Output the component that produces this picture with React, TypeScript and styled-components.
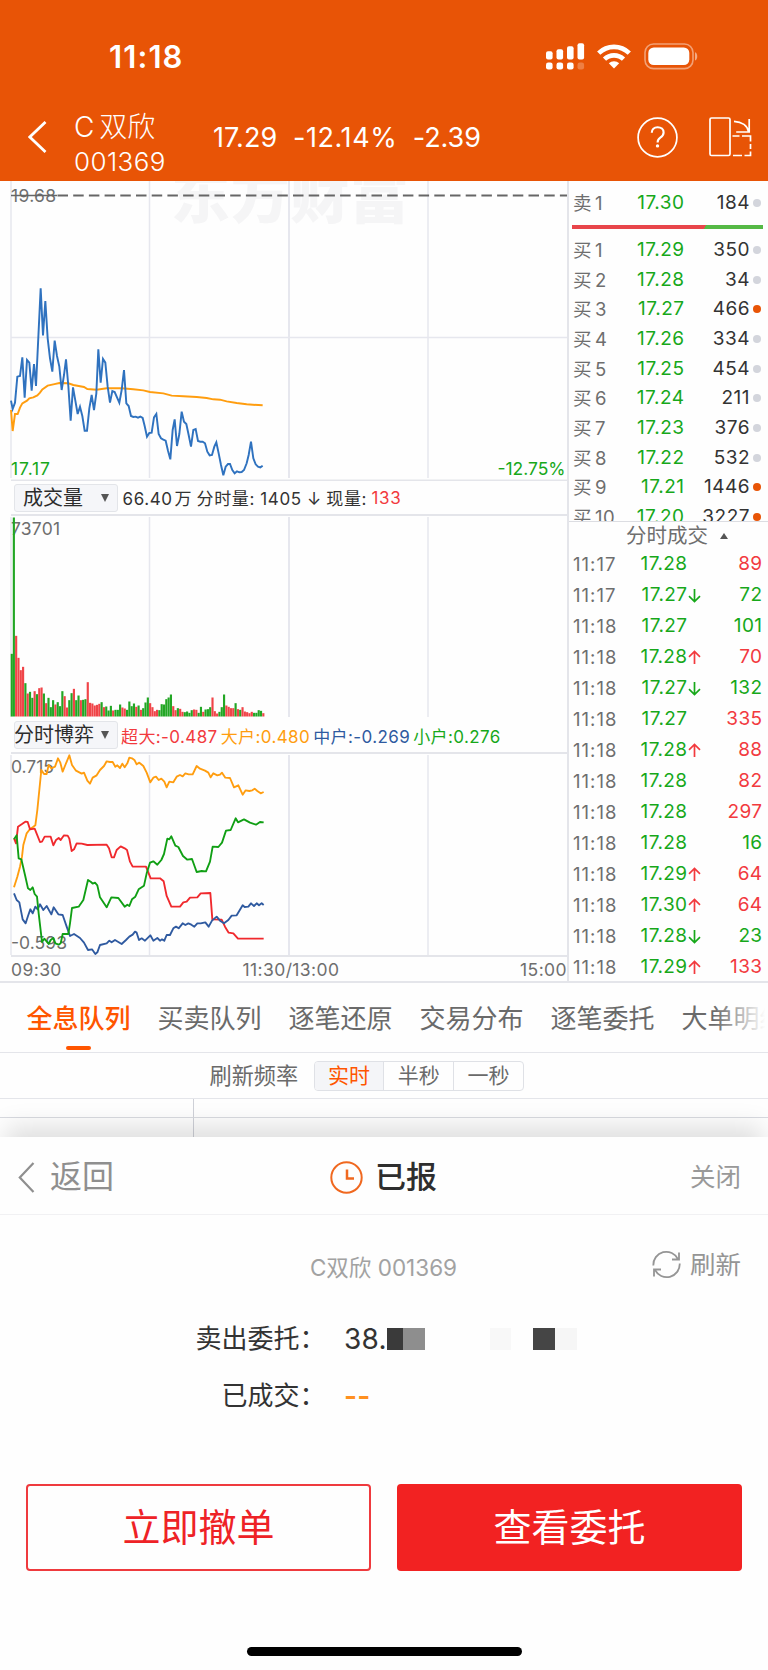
import React from "react";
import styled, { createGlobalStyle, css } from "styled-components";

const C = {
  orange: "#e85406",
  tabOrange: "#ff5500",
  green: "#17a81a",
  red: "#f23a3e",
  grey: "#6e6e6e",
  dark: "#333333",
  line: "#e4e5ea",
  grid: "#e6e7ee",
  bg: "#fefefe",
};
const FONT = `Inter, "Noto Sans CJK SC", sans-serif`;

const GlobalStyle = createGlobalStyle`
  *, *::before, *::after { box-sizing: border-box; }
  body { margin: 0; background: ${C.bg}; font-family: ${FONT}; color: ${C.dark}; }
  svg { display: block; flex: none; }
  svg text { font-family: ${FONT}; }
  button { font-family: inherit; padding: 0; margin: 0; border: 0; background: none; }
`;

/* ---------- page ---------- */
const Page = styled.div`
  width: 768px;
  height: 1670px;
  display: flex;
  flex-direction: column;
  overflow: hidden;
  background: ${C.bg};
`;

/* ---------- header ---------- */
const Header = styled.header`
  height: 181px;
  flex: none;
  background: ${C.orange};
  color: #fff;
`;
const StatusBar = styled.div`
  height: 108px;
  padding: 5px 70.5px 0 109px;
  display: flex;
  align-items: center;
  justify-content: space-between;
`;
const Clock = styled.span`
  font-size: 31px;
  font-weight: 600;
  letter-spacing: 1.1px;
`;
const NavBar = styled.div`
  height: 73px;
  padding: 0 16px 14.5px 28px;
  display: flex;
  align-items: center;
`;
const StockName = styled.div`
  width: 139px;
  margin-left: 27px;
  padding-top: 13.5px;
  display: flex;
  flex-direction: column;
  font-weight: 300;
`;
const NameLine = styled.span`
  height: 35px;
  line-height: 35px;
  font-size: 28px;
  word-spacing: -3px;
`;
const CodeLine = styled.span`
  height: 33px;
  line-height: 33px;
  font-size: 26px;
  letter-spacing: 0.4px;
`;
const Quote = styled.div`
  flex: 1;
  display: flex;
  gap: 15.5px;
  font-size: 27px;
`;
const QuoteValue = styled.span<{ $ls: number }>`
  letter-spacing: ${(p) => p.$ls}px;
`;
const NavIcons = styled.div`
  display: flex;
  align-items: center;
  gap: 31px;
`;

/* ---------- market area ---------- */
const Market = styled.section`
  height: 802px;
  flex: none;
  display: flex;
  overflow: hidden;
  border-bottom: 2px solid ${C.line};
`;
const Charts = styled.div`
  width: 567px;
  display: flex;
  flex-direction: column;
`;
const IndicatorBar = styled.div<{ $h: number; $gap: number; $ls: number }>`
  height: ${(p) => p.$h}px;
  padding-left: 14px;
  display: flex;
  align-items: center;
  gap: ${(p) => p.$gap}px;
  font-size: 17px;
  letter-spacing: ${(p) => p.$ls}px;
  white-space: nowrap;
`;
const Picker = styled.button`
  width: 104px;
  height: 28px;
  padding: 0 8px 0 0;
  display: flex;
  align-items: center;
  justify-content: space-between;
  border: 1.5px solid #e3e5e9;
  border-radius: 3px;
  background: #f5f6f9;
  color: #2c2c2c;
  font-size: 20px;
  line-height: 26px;
  letter-spacing: 0;
`;
const PickerText = styled.span<{ $inset?: number }>`
  margin-left: ${(p) => p.$inset ?? 0}px;
`;
const Triangle = styled.i<{ $up?: boolean }>`
  width: 0;
  height: 0;
  border-left: 4.5px solid transparent;
  border-right: 4.5px solid transparent;
  ${(p) =>
    p.$up
      ? css`border-bottom: 6.5px solid #555;`
      : css`border-top: 8px solid #555;`}
`;
const Stat = styled.span<{ $c?: string; $ws?: number }>`
  color: ${(p) => p.$c ?? C.dark};
  word-spacing: ${(p) => p.$ws ?? 0}px;
`;
const TimeAxis = styled.div`
  flex: 1;
  padding: 1px 0 0 11px;
  display: flex;
  align-items: center;
  justify-content: space-between;
  color: ${C.grey};
  font-size: 17.5px;
  letter-spacing: 0.4px;
`;

/* ---------- order book ---------- */
const Side = styled.aside`
  flex: 1;
  display: flex;
  flex-direction: column;
  border-left: 2px solid ${C.line};
`;
const Book = styled.div`
  height: 341px;
  flex: none;
  overflow: hidden;
  border-bottom: 1.5px solid #dcdde2;
`;
const BookRow = styled.div<{ $first?: boolean }>`
  height: ${(p) => (p.$first ? 41.5 : 29.7)}px;
  padding: ${(p) => (p.$first ? 1.5 : 0)}px 7px 0 4px;
  display: grid;
  grid-template-columns: 50px 61.5px 1fr 11px;
  align-items: center;
  font-size: 19px;
  line-height: 24px;
  letter-spacing: 0.5px;
`;
const Level = styled.span`
  display: flex;
  gap: 3px;
  color: ${C.grey};
  font-size: 18.5px;
  white-space: nowrap;
`;
const Num = styled.span<{ $c?: string }>`
  text-align: right;
  color: ${(p) => p.$c ?? C.dark};
`;
const Dot = styled.i<{ $hot?: boolean }>`
  justify-self: end;
  width: 8px;
  height: 8px;
  border-radius: 50%;
  background: ${(p) => (p.$hot ? C.orange : "#d3d5dc")};
`;
const Ratio = styled.div`
  height: 4px;
  margin: 2.5px 5px 6px 3px;
  background: linear-gradient(120deg, #e8454a 69.5%, #55b945 69.5%);
`;
const TicksTitle = styled.div`
  height: 27px;
  flex: none;
  padding: 1px 0 0 57px;
  display: flex;
  align-items: center;
  gap: 12px;
  color: ${C.grey};
  font-size: 20.5px;
  line-height: 26px;
`;
const TickRow = styled.div`
  height: 30.97px;
  flex: none;
  padding: 0 5.5px 0 4px;
  display: grid;
  grid-template-columns: 53px 61.5px 14px 1fr;
  align-items: center;
  font-size: 19px;
  line-height: 24px;
  letter-spacing: 0.4px;
`;
const Time = styled.span`
  color: ${C.grey};
  font-size: 18.5px;
  letter-spacing: 1px;
`;

/* ---------- tabs ---------- */
const Tabs = styled.nav`
  position: relative;
  height: 69.5px;
  flex: none;
  padding-left: 26.5px;
  display: flex;
  gap: 27px;
  overflow: hidden;
  border-bottom: 1.5px solid ${C.line};
`;
const TabsFade = styled.div`
  position: absolute;
  top: 0;
  right: 0;
  width: 54px;
  height: 68px;
  background: linear-gradient(90deg, rgba(254, 254, 254, 0), ${C.bg} 95%);
`;
const Tab = styled.button<{ $on?: boolean }>`
  flex: none;
  height: 68px;
  display: flex;
  flex-direction: column;
  align-items: center;
  color: ${(p) => (p.$on ? C.tabOrange : "#6a6a6a")};
  font-size: 26px;
  font-weight: ${(p) => (p.$on ? 500 : 400)};
  line-height: 38px;
  padding-top: 17px;
`;
const Underline = styled.i`
  width: 25px;
  height: 4px;
  margin: 8px 0 0 0;
  border-radius: 2px;
  background: ${C.tabOrange};
`;
const RefreshRate = styled.div`
  height: 46.5px;
  flex: none;
  padding: 1px 0 0 209.5px;
  display: flex;
  align-items: center;
  gap: 15.5px;
  border-bottom: 1.5px solid ${C.line};
  color: #6a6a6a;
  font-size: 22.2px;
  line-height: 30px;
`;
const Segments = styled.div`
  width: 210px;
  height: 30px;
  display: flex;
  border: 1.5px solid #dfe1e6;
  border-radius: 4px;
  overflow: hidden;
`;
const Segment = styled.button<{ $on?: boolean }>`
  flex: 1;
  color: ${(p) => (p.$on ? C.tabOrange : "#6a6a6a")};
  background: ${(p) => (p.$on ? "#f4f5f8" : "transparent")};
  font-size: 21px;
  line-height: 26px;
  & + & { border-left: 1.5px solid #dfe1e6; }
`;
const QueuePeek = styled.div`
  height: 38px;
  flex: none;
  display: grid;
  grid-template-columns: 194px 1fr;
  grid-template-rows: 19px 19px;
`;
const PeekCell = styled.div<{ $right?: boolean; $bottom?: boolean }>`
  border-right: ${(p) => (p.$right ? "1.5px solid #cfd1d8" : "0")};
  border-bottom: ${(p) => (p.$bottom ? "1.5px solid #d8dae0" : "0")};
`;

/* ---------- order sheet ---------- */
const Sheet = styled.section`
  position: relative;
  flex: 1;
  display: flex;
  flex-direction: column;
  background: ${C.bg};
  box-shadow: 0 -16px 24px -6px rgba(0, 0, 0, 0.13);
  clip-path: inset(-38px 0 0 0);
`;
const SheetHeader = styled.div`
  height: 78px;
  padding: 3px 27px 0 18px;
  display: grid;
  grid-template-columns: 1fr auto 1fr;
  align-items: center;
  border-bottom: 1.5px solid #f1f1f3;
`;
const Back = styled.button`
  display: flex;
  align-items: center;
  gap: 15px;
  color: #8f8f8f;
  font-size: 32px;
  line-height: 44px;
`;
const SheetTitle = styled.h1`
  margin: 0 0 0 8px;
  display: flex;
  align-items: center;
  gap: 12px;
  color: #2e2e2e;
  font-size: 31px;
  font-weight: 500;
  line-height: 44px;
`;
const Close = styled.button`
  justify-self: end;
  color: #999;
  font-size: 25.5px;
  line-height: 36px;
`;
const Subject = styled.div`
  height: 70px;
  margin-top: 14.5px;
  padding: 0 27px;
  display: grid;
  grid-template-columns: 1fr auto 1fr;
  align-items: center;
  color: #a2a2a2;
`;
const SubjectName = styled.span`
  grid-column: 2;
  padding: 2px 1px 0 0;
  font-size: 22.5px;
`;
const Reload = styled.button`
  justify-self: end;
  display: flex;
  align-items: center;
  gap: 9px;
  color: #959595;
  font-size: 25.5px;
  line-height: 36px;
`;
const Details = styled.div`
  margin-top: 11.5px;
`;
const Detail = styled.div`
  height: 56.5px;
  display: grid;
  grid-template-columns: 325.5px 1fr;
  column-gap: 18.5px;
  align-items: center;
  font-size: 26px;
  line-height: 38px;
  color: ${C.dark};
`;
const DetailLabel = styled.span`
  text-align: right;
`;
const DetailValue = styled.span<{ $pending?: boolean }>`
  display: flex;
  align-items: center;
  font-size: 28px;
  font-weight: ${(p) => (p.$pending ? 600 : 400)};
  letter-spacing: 0.3px;
  color: ${(p) => (p.$pending ? "#ff9020" : C.dark)};
`;
const Mask = styled.i<{ $w: number; $c?: string }>`
  width: ${(p) => p.$w}px;
  height: 22px;
  margin-top: -1px;
  background: ${(p) => p.$c ?? "transparent"};
`;
const Actions = styled.div`
  margin-top: 59.5px;
  padding: 0 26px;
  display: flex;
  gap: 26px;
`;
const Action = styled.button<{ $solid?: boolean }>`
  flex: 1;
  height: 87px;
  border: 2px solid ${(p) => (p.$solid ? "#f22222" : "#ef3a3e")};
  border-radius: 4px;
  background: ${(p) => (p.$solid ? "#f22222" : "transparent")};
  color: ${(p) => (p.$solid ? "#fff" : "#ee2226")};
  font-size: 38px;
  line-height: 56px;
`;
const HomeBar = styled.div`
  width: 275px;
  height: 9px;
  margin: auto auto 14px;
  border-radius: 5px;
  background: #000;
`;

/* ---------- icons ---------- */
const StatusIcons = styled.div`
  display: flex;
  align-items: center;
  gap: 12.5px;
`;
const Signal = () => (
  <svg width="39" height="27" viewBox="0 0 39 27" fill="#fff">
    <rect x="0" y="8.2" width="6.6" height="8.3" rx="2" />
    <rect x="10.5" y="6.2" width="6.6" height="10.3" rx="2" />
    <rect x="21" y="3.2" width="6.6" height="13.3" rx="2" />
    <rect x="31.5" y="0.2" width="6.6" height="16.3" rx="2" />
    <rect x="0" y="19.5" width="6.6" height="7" rx="2.2" />
    <rect x="10.5" y="19.5" width="6.6" height="7" rx="2.2" />
    <rect x="21" y="19.5" width="6.6" height="7" rx="2.2" />
    <rect x="31.5" y="19.5" width="6.6" height="7" rx="2.2" opacity=".25" />
  </svg>
);
const Wifi = () => (
  <svg width="34" height="25" viewBox="0 0 34 25" fill="none" stroke="#fff" strokeWidth="4.6">
    <path d="M1.7 9.1a21.8 21.8 0 0 1 30.6 0" />
    <path d="M7.5 15.2a13.6 13.6 0 0 1 19 0" />
    <path d="M17 24.6l-5.2-5.3a7.4 7.4 0 0 1 10.4 0z" fill="#fff" stroke="none" />
  </svg>
);
const Battery = () => (
  <svg width="54" height="27" viewBox="0 0 54 27">
    <rect x="1" y="1" width="48" height="24.6" rx="8.5" fill="none" stroke="#fff" strokeOpacity=".45" strokeWidth="1.6" />
    <rect x="4.3" y="4.5" width="41" height="17.6" rx="5.5" fill="#fff" />
    <path d="M51 9.2c3 1 3 7.3 0 8.4z" fill="#fff" fillOpacity=".5" />
  </svg>
);
const Chevron = ({ w, h, sw }: { w: number; h: number; sw: number }) => (
  <svg width={w} height={h} viewBox={`0 0 ${w} ${h}`} fill="none" stroke="currentColor" strokeWidth={sw}>
    <path d={`M${w - 1.5} 1L1.8 ${h / 2}L${w - 1.5} ${h - 1}`} />
  </svg>
);
const Help = () => (
  <svg width="41" height="41" viewBox="0 0 41 41" fill="none" stroke="#fff" strokeWidth="1.7">
    <circle cx="20.5" cy="20.5" r="19.4" />
    <path d="M14.8 15.8c0-3.3 2.3-5.6 5.8-5.6s6 2.1 6 5.2c0 2.6-1.3 3.8-3.3 5.2c-2 1.4-2.7 2.4-2.7 5" strokeWidth="2.1" />
    <circle cx="20.5" cy="28.9" r="1.7" fill="#fff" stroke="none" />
  </svg>
);
const Rotate = () => (
  <svg width="43" height="40" viewBox="0 0 43 40" fill="none" stroke="#fff" strokeWidth="1.7">
    <rect x="1" y="1" width="20" height="37.5" rx="1.5" />
    <path d="M25 4.3c8 .5 13.5 4.5 14.6 10.5M40.2 2v13h-13" />
    <path d="M23.5 19h7m2.5 0h8.5v5.5m0 2.5v5m0 2.5v4h-6m-2.5 0h-9" />
  </svg>
);
const Arrow = ({ up }: { up?: boolean }) => (
  <svg width="13" height="15" viewBox="0 0 13 15" fill="none" stroke={up ? C.red : C.green} strokeWidth="1.7">
    <path d={up ? "M6.5 14V1.5M1 6.8L6.5 1.5L12 6.8" : "M6.5 1v12.5M1 8.2L6.5 13.5L12 8.2"} />
  </svg>
);
const ClockIcon = () => (
  <svg width="33" height="33" viewBox="0 0 33 33" fill="none" stroke="#f0681f" strokeWidth="2">
    <circle cx="16.5" cy="16.5" r="15.2" />
    <path d="M17 8.5v9h7" strokeWidth="2.5" />
  </svg>
);
const ReloadIcon = () => (
  <svg width="29" height="29" viewBox="0 0 29 29" fill="none" stroke="currentColor" strokeWidth="1.8">
    <path d="M1.3 15.5A13 13 0 0 1 26 9.2M27 2.5v7h-7" />
    <path d="M27.7 13.5A13 13 0 0 1 3 19.8M2 26.5v-7h7" />
  </svg>
);

/* ---------- chart data (three units per pixel) ---------- */
const PRICE =
  "33,662 38,687 45,668 52,590 60,588 67,532 74,653 81,540 88,548 95,632 102,552 108,618 122,325 129,466 136,363 143,475 150,535 157,575 164,482 171,528 178,560 185,630 192,585 198,538 205,618 212,722 219,622 226,662 233,702 240,680 247,708 254,752 261,752 268,685 275,645 282,690 289,640 295,508 302,608 309,537 316,548 323,620 330,668 337,633 344,636 351,652 358,668 365,630 372,570 379,670 386,678 393,708 400,711 407,710 414,713 421,710 428,714 434,738 441,770 448,759 455,758 462,712 469,702 476,762 483,775 490,779 497,782 504,812 511,838 518,750 524,718 531,798 538,762 545,695 552,725 559,732 566,765 573,800 580,750 587,747 594,783 601,785 608,785 615,790 622,815 629,826 636,825 643,800 649,787 656,820 663,855 670,886 677,860 684,852 690,852 697,870 704,880 711,874 718,877 725,876 732,870 740,850 746,825 753,785 760,835 767,853 774,860 781,862 788,857";
const AVERAGE =
  "33,690 38,753 45,702 53,702 60,683 67,670 81,662 88,655 100,652 112,646 120,638 127,628 143,617 160,613 178,609 205,610 220,615 252,621 262,627 290,629 320,625 365,625 400,628 430,631 450,636 490,640 515,647 550,649 590,651 620,654 640,658 660,659 680,664 710,669 740,673 788,676";
const VOLUME =
  "188g 597g 242r 176r 139r 149r 100g 69r 74g 56g 76r 67g 85r 87r 69g 40r 56g 28g 49g 36r 43g 31g 76g 61r 27r 49g 70g 83r 49g 63g 49r 50g 52g 103r 41r 39r 33r 35r 38r 43g 28r 30g 18g 32g 18r 20g 20g 36g 27r 24r 20g 45g 31g 39g 29r 33g 20r 25g 42g 57g 40r 28r 16r 20r 19g 37g 36g 52g 57g 66g 31r 19r 25g 23r 14r 13g 15g 11g 19g 21r 20r 11g 29g 14r 21g 22g 28g 57r 16r 9r 14g 28g 66g 33r 29r 25r 25r 40g 22r 20g 28r 15r 13r 10r 14r 11g 11g 19g 17g 10r".split(" ");
const FLOWS = [
  { c: "#ff9d0f", p: "42,532 52,500 60,470 66,440 70,405 80,370 90,357 98,352 106,346 112,300 118,240 124,180 132,192 140,192 146,165 154,175 165,170 174,145 181,158 188,185 196,165 208,136 216,165 228,182 245,191 252,188 262,212 270,221 278,203 290,196 300,180 312,168 320,154 330,156 338,156 346,170 352,166 360,174 367,161 374,172 382,160 388,143 396,145 404,151 410,163 418,158 430,168 440,188 451,217 460,203 468,200 476,210 484,206 493,215 500,232 508,215 520,217 530,200 540,195 548,199 556,190 566,193 578,193 590,168 600,176 615,182 625,188 632,202 640,190 652,196 660,194 666,188 676,203 690,204 702,232 715,226 728,254 737,241 748,243 757,241 764,236 772,243 782,250 791,246" },
  { c: "#f0292d", p: "42,385 48,400 54,350 66,342 76,335 83,336 90,358 104,356 120,396 126,395 134,380 152,380 160,406 168,390 176,384 182,390 192,376 203,377 208,386 215,423 222,418 230,400 245,401 262,405 320,404 327,415 335,442 342,442 350,420 362,409 374,415 381,420 390,455 398,470 438,470 444,485 452,505 480,505 491,514 500,558 514,590 540,590 550,577 560,575 570,563 592,562 602,550 631,549 637,628 665,629 675,650 686,668 700,670 714,686 791,686" },
  { c: "#2f5aa0", p: "42,550 50,570 58,577 68,628 77,640 84,618 91,598 98,610 106,590 113,598 120,583 130,600 140,588 154,613 161,592 175,613 188,615 200,650 210,678 222,672 240,684 252,698 264,720 276,718 286,732 292,727 300,705 320,700 328,692 335,697 345,690 365,702 378,690 388,680 398,674 405,665 410,668 417,690 425,685 435,692 451,676 460,692 472,684 480,692 486,688 493,692 500,675 510,675 520,655 528,650 536,655 548,640 556,645 565,640 574,644 583,650 592,640 602,640 616,637 626,650 636,632 650,620 660,632 672,640 685,630 695,617 710,616 728,586 734,591 745,590 753,580 762,588 770,580 777,586 785,580 791,585" },
  { c: "#109f14", p: "42,388 50,376 56,445 64,448 75,495 84,535 91,540 98,532 104,552 111,560 116,610 126,696 133,686 146,702 152,690 160,684 166,700 176,704 182,700 188,672 205,672 210,640 216,594 236,590 250,570 264,510 273,516 278,521 285,518 292,526 300,562 320,592 334,562 355,564 374,590 382,584 388,588 396,568 406,560 416,538 432,527 440,490 450,458 460,454 472,464 484,450 492,432 502,386 508,388 514,379 526,407 535,411 549,438 562,449 576,447 590,486 605,483 618,484 630,455 638,410 655,411 666,398 678,362 692,360 707,325 714,337 732,328 750,338 768,344 780,336 791,337" },
];

const Verticals = ({ h }: { h: number }) => (
  <g stroke={C.grid} strokeWidth="1.5">
    <path d={`M11 0V${h}M149.5 0V${h}M428 0V${h}`} />
    <path d={`M289 0V${h}`} strokeWidth="2" />
  </g>
);

const PriceChart = () => (
  <svg width="567" height="300" viewBox="0 0 567 300" fontSize="17.5">
    <text x="171" y="37" fontSize="59" fontWeight="900" fill="#f5f5f6" textLength="238">东方财富</text>
    <Verticals h={297} />
    <path d="M11 156.5H567" stroke={C.grid} strokeWidth="1.5" />
    <path d="M11 299.5H567" stroke={C.line} strokeWidth="2" />
    <text x="11" y="21" fill={C.grey} textLength="45">19.68</text>
    <path d="M11 14.5H57" stroke="#666" strokeWidth="1.5" />
    <path d="M57.5 14.5H567" stroke="#666" strokeWidth="1.8" strokeDasharray="10.5 5.2" />
    <text x="11" y="294" fill={C.green} textLength="39">17.17</text>
    <text x="497.5" y="294" fill={C.green} textLength="68">-12.75%</text>
    <g transform="translate(0 -1) scale(.33333)" fill="none" strokeWidth="5.8" strokeLinejoin="miter">
      <polyline points={AVERAGE} stroke="#ff9d0f" />
      <polyline points={PRICE} stroke="#2f72bf" />
    </g>
  </svg>
);

const VolumeChart = () => (
  <svg width="567" height="204" viewBox="0 0 567 204" fontSize="17.5">
    <path d="M11 1H567" stroke={C.line} strokeWidth="2" />
    <g transform="translate(0 3)"><Verticals h={200} /></g>
    <text x="11" y="20.5" fill={C.grey} textLength="49">73701</text>
    {VOLUME.map((v, i) => {
      const h = parseInt(v, 10) / 3;
      const x = Math.max(10.7, (34.6 + 6.93 * i - 3.2) / 3);
      return (
        <rect key={i} x={x} y={202.5 - h} width={2.15} height={h} fill={v.endsWith("r") ? "#f04448" : "#22a624"} />
      );
    })}
  </svg>
);

const FlowChart = () => (
  <svg width="567" height="205" viewBox="0 0 567 205" fontSize="17.5">
    <path d="M11 1H567M11 204H567" stroke={C.line} strokeWidth="2" />
    <g transform="translate(0 3)"><Verticals h={200} /></g>
    <text x="11" y="21" fill={C.grey} textLength="43">0.715</text>
    <text x="11" y="197" fill={C.grey} textLength="56">-0.593</text>
    <g transform="translate(0 -42) scale(.33333)" fill="none" strokeWidth="5.6" strokeLinejoin="round">
      {FLOWS.map((f) => <polyline key={f.c} points={f.p} stroke={f.c} />)}
    </g>
  </svg>
);

const BIDS: [number, string, number, boolean][] = [
  [1, "17.29", 350, false], [2, "17.28", 34, false], [3, "17.27", 466, true],
  [4, "17.26", 334, false], [5, "17.25", 454, false], [6, "17.24", 211, false],
  [7, "17.23", 376, false], [8, "17.22", 532, false], [9, "17.21", 1446, true],
  [10, "17.20", 3227, true],
];
const TICKS: [string, string, "" | "u" | "d", number, "r" | "g"][] = [
  ["11:17", "17.28", "", 89, "r"], ["11:17", "17.27", "d", 72, "g"],
  ["11:18", "17.27", "", 101, "g"], ["11:18", "17.28", "u", 70, "r"],
  ["11:18", "17.27", "d", 132, "g"], ["11:18", "17.27", "", 335, "r"],
  ["11:18", "17.28", "u", 88, "r"], ["11:18", "17.28", "", 82, "r"],
  ["11:18", "17.28", "", 297, "r"], ["11:18", "17.28", "", 16, "g"],
  ["11:18", "17.29", "u", 64, "r"], ["11:18", "17.30", "u", 64, "r"],
  ["11:18", "17.28", "d", 23, "g"], ["11:18", "17.29", "u", 133, "r"],
];

export default function App() {
  return (
    <>
      <GlobalStyle />
      <Page>
        <Header>
          <StatusBar>
            <Clock>11:18</Clock>
            <StatusIcons><Signal /><Wifi /><Battery /></StatusIcons>
          </StatusBar>
          <NavBar>
            <Chevron w={19} h={32} sw={2.8} />
            <StockName>
              <NameLine>C 双欣</NameLine>
              <CodeLine>001369</CodeLine>
            </StockName>
            <Quote>
              <QuoteValue $ls={0.1}>17.29</QuoteValue>
              <QuoteValue $ls={0.6}>-12.14%</QuoteValue>
              <QuoteValue $ls={-0.1}>-2.39</QuoteValue>
            </Quote>
            <NavIcons><Help /><Rotate /></NavIcons>
          </NavBar>
        </Header>

        <Market>
          <Charts>
            <PriceChart />
            <IndicatorBar $h={33} $gap={4.5} $ls={0.6}>
              <Picker><PickerText $inset={8}>成交量</PickerText><Triangle /></Picker>
              <Stat $ws={-3.5}>66.40 万</Stat>
              <Stat>分时量: 1405 ↓</Stat>
              <Stat>现量:</Stat>
              <Stat $c={C.red}>133</Stat>
            </IndicatorBar>
            <VolumeChart />
            <IndicatorBar $h={34} $gap={3} $ls={0.4}>
              <Picker><PickerText $inset={-1}>分时博弈</PickerText><Triangle /></Picker>
              <Stat $c={C.red}>超大:-0.487</Stat>
              <Stat $c="#ff9d0f">大户:0.480</Stat>
              <Stat $c="#2f5aa0">中户:-0.269</Stat>
              <Stat $c={C.green}>小户:0.276</Stat>
            </IndicatorBar>
            <FlowChart />
            <TimeAxis><span>09:30</span><span>11:30/13:00</span><span>15:00</span></TimeAxis>
          </Charts>
          <Side>
            <Book>
              <BookRow $first>
                <Level><span>卖</span><span>1</span></Level>
                <Num $c={C.green}>17.30</Num><Num>184</Num><Dot />
              </BookRow>
              <Ratio />
              {BIDS.map(([n, price, qty, hot]) => (
                <BookRow key={n}>
                  <Level><span>买</span><span>{n}</span></Level>
                  <Num $c={C.green}>{price}</Num><Num>{qty}</Num><Dot $hot={hot} />
                </BookRow>
              ))}
            </Book>
            <TicksTitle>分时成交<Triangle $up /></TicksTitle>
            {TICKS.map(([time, price, dir, qty, side], i) => (
              <TickRow key={i}>
                <Time>{time}</Time>
                <Num $c={C.green}>{price}</Num>
                <span>{dir && <Arrow up={dir === "u"} />}</span>
                <Num $c={side === "r" ? C.red : C.green}>{qty}</Num>
              </TickRow>
            ))}
          </Side>
        </Market>

        <Tabs>
          <Tab $on>全息队列<Underline /></Tab>
          <Tab>买卖队列</Tab>
          <Tab>逐笔还原</Tab>
          <Tab>交易分布</Tab>
          <Tab>逐笔委托</Tab>
          <Tab>大单明细</Tab>
          <TabsFade />
        </Tabs>
        <RefreshRate>
          刷新频率
          <Segments>
            <Segment $on>实时</Segment>
            <Segment>半秒</Segment>
            <Segment>一秒</Segment>
          </Segments>
        </RefreshRate>
        <QueuePeek>
          <PeekCell $right $bottom /><PeekCell $bottom />
          <PeekCell $right /><PeekCell />
        </QueuePeek>

        <Sheet>
          <SheetHeader>
            <Back><Chevron w={17} h={31} sw={2.2} />返回</Back>
            <SheetTitle><ClockIcon />已报</SheetTitle>
            <Close>关闭</Close>
          </SheetHeader>
          <Subject>
            <SubjectName>C双欣 001369</SubjectName>
            <Reload><ReloadIcon />刷新</Reload>
          </Subject>
          <Details>
            <Detail>
              <DetailLabel>卖出委托：</DetailLabel>
              <DetailValue>
                38.
                <Mask $w={16} $c="#3a3a3a" /><Mask $w={22} $c="#8e8e8e" /><Mask $w={65} />
                <Mask $w={21} $c="#f8f8f8" /><Mask $w={22} />
                <Mask $w={22} $c="#454545" /><Mask $w={22} $c="#f6f6f6" />
              </DetailValue>
            </Detail>
            <Detail>
              <DetailLabel>已成交：</DetailLabel>
              <DetailValue $pending>--</DetailValue>
            </Detail>
          </Details>
          <Actions>
            <Action>立即撤单</Action>
            <Action $solid>查看委托</Action>
          </Actions>
          <HomeBar />
        </Sheet>
      </Page>
    </>
  );
}
